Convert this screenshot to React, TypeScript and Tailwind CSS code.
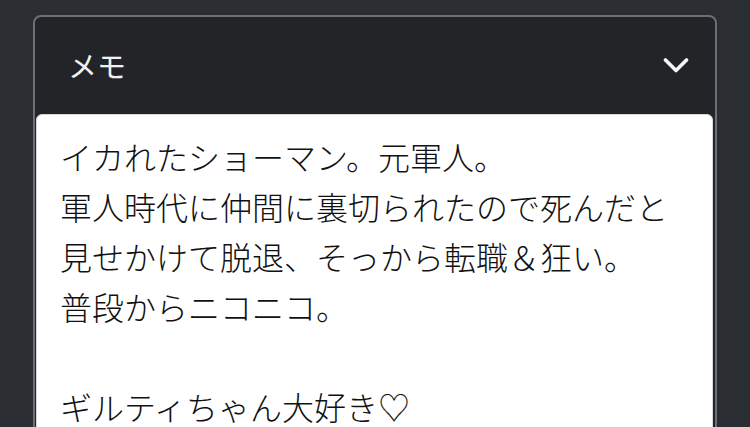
import React from "react";

export default function App() {
  const lines = [
    "イカれたショーマン。元軍人。",
    "軍人時代に仲間に裏切られたので死んだと",
    "見せかけて脱退、そっから転職＆狂い。",
    "普段からニコニコ。",
    "",
    "ギルティちゃん大好き♡",
  ];
  return (
    <div
      className="w-[750px] h-[427px] overflow-hidden bg-[#2a2d32] pt-[15px] px-[33px]"
      style={{ fontFamily: '"Noto Sans CJK JP", "Noto Sans", sans-serif' }}
    >
      <div className="border-2 border-[#6c6f73] rounded-[8px] bg-[#222428] h-[520px] flex flex-col">
        <div className="h-[97px] flex items-center justify-between pl-[33px] pr-[26px] shrink-0">
          <span className="text-[29px] text-[#f2f2f2] leading-none">メモ</span>
          <svg width="26" height="17" viewBox="0 0 26 17" fill="none">
            <polyline
              points="2.5,3 13,13.5 23.5,3"
              stroke="#f5f5f5"
              strokeWidth="3.6"
              strokeLinecap="round"
              strokeLinejoin="round"
            />
          </svg>
        </div>
        <div className="ml-[1px] mr-[2px] bg-white rounded-t-[6px] border border-[#d9d9d9] pl-[23px] pt-[16px] text-[32px] leading-[50px] text-[#111111] font-light flex-1">
          {lines.map((l, i) => (
            <div key={i} className="h-[50px] whitespace-nowrap">
              {l}
            </div>
          ))}
        </div>
      </div>
    </div>
  );
}
